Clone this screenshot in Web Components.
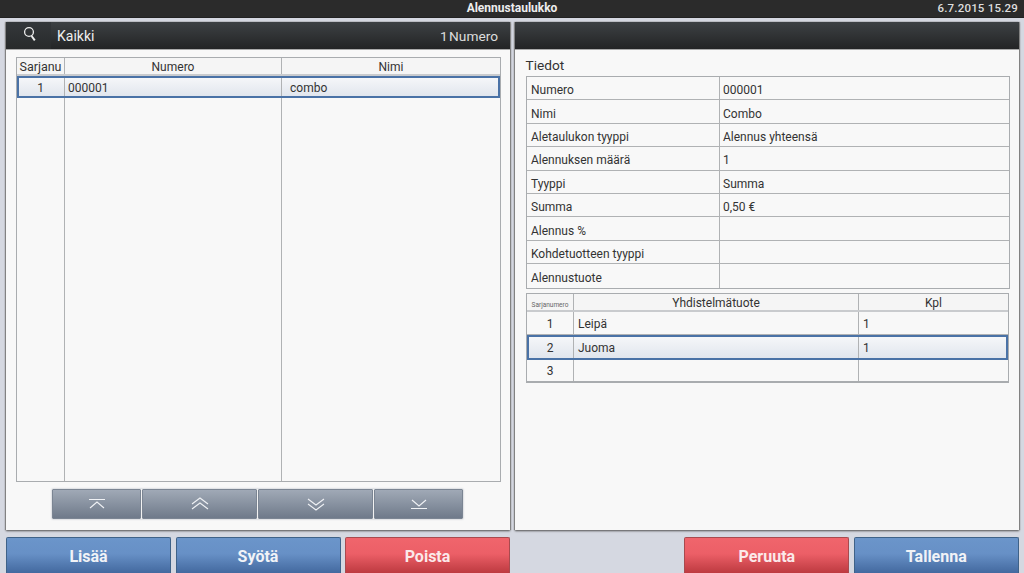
<!DOCTYPE html>
<html lang="fi"><head><meta charset="utf-8"><title>Alennustaulukko</title>
<style>
html,body{margin:0;padding:0;height:573px;width:1024px;overflow:hidden;background:#d5d8e1;font-family:Roboto,"Liberation Sans",sans-serif;color:#333}
</style></head><body>
<template id="t-shell"><style>
:host{display:grid;grid-template-rows:17px 520px 36px;height:573px;width:1024px}
.main{display:grid;grid-template-columns:504px 504px;column-gap:5px;padding:5px 5px 7px 6px;min-height:0;height:520px;box-sizing:border-box}
.foot{display:grid;grid-template-columns:165px 165px 165px 1fr 165px 165px;column-gap:4.5px;padding:0 5.2px 0 6px}
</style><slot name="top"></slot><div class="main"><slot name="panels"></slot></div><div class="foot"><slot name="foot"></slot></div></template>

<template id="t-top"><style>
:host{display:grid;grid-template-columns:1fr auto 1fr;align-items:center;background:#2b2b2b;color:#eee;font:700 12px/17px Roboto,sans-serif;box-sizing:border-box;height:18px;margin-bottom:-1px;border-bottom:1px solid #222}
.d{justify-self:end;padding-right:6px;font-weight:500;font-size:11.5px;color:#ddd;letter-spacing:.2px}
</style><span></span><span><slot></slot></span><span class="d"><slot name="date"></slot></span></template>

<template id="t-panel"><style>
:host{display:flex;flex-direction:column;background:#f8f8f8;box-shadow:0 1px 2px #555,1px 0 1px #999,-1px 0 1px #999;min-height:0}
.h{flex:0 0 28px;height:28px;display:flex;align-items:center;background:linear-gradient(#3d4144,#232425);color:#eee;font-size:14px;border-bottom:1px solid #aaa;box-sizing:border-box}
.b{flex:1;min-height:0;display:flex;flex-direction:column}
</style><div class="h"><slot name="head"></slot></div><div class="b"><slot></slot></div></template>

<template id="t-table"><style>
:host{display:block;font:12px/1 Roboto,sans-serif;color:#333;box-sizing:border-box;border:1px solid #a9acaf;background:#f8f8f8}
</style><slot></slot></template>

<template id="t-row"><style>
:host{display:grid;grid-template-columns:var(--cols);height:var(--h,23px);box-sizing:border-box;border-bottom:1px solid #b0b2b4;align-items:stretch}
:host([selected]){background:linear-gradient(#f7f8fa,#dfe4ec);outline:2px solid #4a72a6;outline-offset:-2px;border-bottom:0;position:relative}
:host([head]){background:#f5f5f5;border-bottom:2px solid #c9cbce}
:host([last]){border-bottom:0}
</style><slot></slot></template>

<template id="t-cell"><style>
:host{display:flex;align-items:center;padding:var(--pt,2px) 4px 0;border-left:1px solid #b0b2b4;white-space:nowrap;overflow:hidden;min-width:0;box-sizing:border-box}
:host(:first-child){border-left:0}
:host(:not(:first-child)){padding-left:var(--pl2,4px)}
:host([c]){justify-content:center;padding:var(--pt,2px) 0 0}
</style><slot></slot></template>

<template id="t-btn"><style>
:host{display:flex;align-items:center;justify-content:center;color:#f1f3f7;font:700 16px/1 Roboto,sans-serif;box-sizing:border-box;border:1px solid #3f6288;border-bottom:0;border-radius:2px 2px 0 0;background:linear-gradient(#6b95ca,#6790c6 45%,#43699f);padding-top:3px}
:host([red]){background:linear-gradient(#f0656c,#ec5f67 45%,#bd3a40);border-color:#a84a4e;color:#fbe9ea}
</style><slot></slot></template>

<template id="t-pager"><style>
:host{display:grid;grid-template-columns:89px 115px 115px 89px;column-gap:1px;width:411px;height:30px;margin:7px 0 0 46px;box-shadow:0 0 2px #b0b6c0;background:#f2f2f2}
</style><slot></slot></template>

<template id="t-pbtn"><style>
:host{display:flex;align-items:center;justify-content:center;background:linear-gradient(#a0a9b6,#6f7a8a);border:1px solid #7b8593;box-sizing:border-box;border-radius:1px;min-width:0;overflow:hidden}
</style><slot></slot></template>

<app-shell>
 <top-bar slot="top">Alennustaulukko<span slot="date">6.7.2015 15.29</span></top-bar>

 <ui-panel slot="panels" id="lp">
  <div slot="head" style="display:flex;align-items:center;width:100%">
   <div style="width:45px;height:27px;display:flex;align-items:center;justify-content:center;background:linear-gradient(#34383b,#282a2b)">
    <svg width="16" height="18" viewBox="0 0 16 18" fill="none" stroke="#eee" style="margin-left:2px;margin-top:-3px"><circle cx="7" cy="7" r="4.4" stroke-width="1.3"/><path d="M9.6 11l3.2 4.4" stroke-width="2"/></svg>
   </div>
   <span style="margin-left:6px">Kaikki</span>
   <span style="margin-left:auto;padding-right:12px;color:#ddd;word-spacing:-2px;font-size:13.7px">1 Numero</span>
  </div>
  <ui-table id="lt" style="--cols:47px 217px 1fr;margin:7px 9px 0 10px;height:425px;position:relative">
   <ui-row head style="--h:18px"><ui-cell c><span style="font-size:12.5px">Sarjanu</span></ui-cell><ui-cell c>Numero</ui-cell><ui-cell c>Nimi</ui-cell></ui-row>
   <ui-row selected style="--h:22px"><ui-cell c>1</ui-cell><ui-cell style="padding-left:3px">000001</ui-cell><ui-cell style="padding-left:8px">combo</ui-cell></ui-row>
   <ui-row last style="--h:383px"><ui-cell></ui-cell><ui-cell></ui-cell><ui-cell></ui-cell></ui-row>
  </ui-table>
  <ui-pager>
   <ui-pbtn><svg width="20" height="14" viewBox="0 0 20 14" fill="none" stroke="#f0f2f5" stroke-width="1.1"><path d="M2 2.5h16M3 11l7-6 7 6"/></svg></ui-pbtn>
   <ui-pbtn><svg width="20" height="14" viewBox="0 0 20 14" fill="none" stroke="#f0f2f5" stroke-width="1.1"><path d="M2 7l8-6 8 6M2 12l8-6 8 6"/></svg></ui-pbtn>
   <ui-pbtn><svg width="20" height="14" viewBox="0 0 20 14" fill="none" stroke="#f0f2f5" stroke-width="1.1"><path d="M2 2l8 6 8-6M2 7l8 6 8-6"/></svg></ui-pbtn>
   <ui-pbtn><svg width="20" height="14" viewBox="0 0 20 14" fill="none" stroke="#f0f2f5" stroke-width="1.1"><path d="M3 3l7 6 7-6M2 11.5h16"/></svg></ui-pbtn>
  </ui-pager>
 </ui-panel>

 <ui-panel slot="panels">
  <span slot="head"></span>
  <div style="font-size:13.7px;line-height:16px;padding:7px 0 3px 10.5px;color:#333">Tiedot</div>
  <ui-table style="--cols:192px 1fr;--h:23.4px;--pt:4px;--pl2:3px;margin:0 9px 0 11px">
   <ui-row><ui-cell>Numero</ui-cell><ui-cell>000001</ui-cell></ui-row>
   <ui-row><ui-cell>Nimi</ui-cell><ui-cell>Combo</ui-cell></ui-row>
   <ui-row><ui-cell>Aletaulukon tyyppi</ui-cell><ui-cell>Alennus yhteensä</ui-cell></ui-row>
   <ui-row><ui-cell>Alennuksen määrä</ui-cell><ui-cell>1</ui-cell></ui-row>
   <ui-row><ui-cell>Tyyppi</ui-cell><ui-cell>Summa</ui-cell></ui-row>
   <ui-row><ui-cell>Summa</ui-cell><ui-cell>0,50 €</ui-cell></ui-row>
   <ui-row><ui-cell>Alennus %</ui-cell><ui-cell></ui-cell></ui-row>
   <ui-row><ui-cell>Kohdetuotteen tyyppi</ui-cell><ui-cell></ui-cell></ui-row>
   <ui-row last><ui-cell>Alennustuote</ui-cell><ui-cell></ui-cell></ui-row>
  </ui-table>
  <ui-table style="--cols:46px 285px 1fr;margin:4px 10px 0 11px;border-bottom-width:2px">
   <ui-row head style="--h:18px"><ui-cell c><span style="font-size:6.5px;color:#666;padding-top:5px">Sarjanumero</span></ui-cell><ui-cell c>Yhdistelmätuote</ui-cell><ui-cell c>Kpl</ui-cell></ui-row>
   <ui-row style="--h:23px"><ui-cell c>1</ui-cell><ui-cell>Leipä</ui-cell><ui-cell>1</ui-cell></ui-row>
   <ui-row selected style="--h:25px"><ui-cell c>2</ui-cell><ui-cell>Juoma</ui-cell><ui-cell>1</ui-cell></ui-row>
   <ui-row last style="--h:21px"><ui-cell c>3</ui-cell><ui-cell></ui-cell><ui-cell></ui-cell></ui-row>
  </ui-table>
 </ui-panel>

 <ui-btn slot="foot">Lisää</ui-btn>
 <ui-btn slot="foot">Syötä</ui-btn>
 <ui-btn slot="foot" red>Poista</ui-btn>
 <span slot="foot"></span>
 <ui-btn slot="foot" red>Peruuta</ui-btn>
 <ui-btn slot="foot">Tallenna</ui-btn>
</app-shell>

<script>
const map={ 'app-shell':'t-shell','top-bar':'t-top','ui-panel':'t-panel','ui-table':'t-table','ui-row':'t-row','ui-cell':'t-cell','ui-btn':'t-btn','ui-pager':'t-pager','ui-pbtn':'t-pbtn'};
for(const [tag,id] of Object.entries(map)){
  customElements.define(tag,class extends HTMLElement{
    constructor(){super();this.attachShadow({mode:'open'}).appendChild(document.getElementById(id).content.cloneNode(true));}
  });
}
</script>
</body></html>
